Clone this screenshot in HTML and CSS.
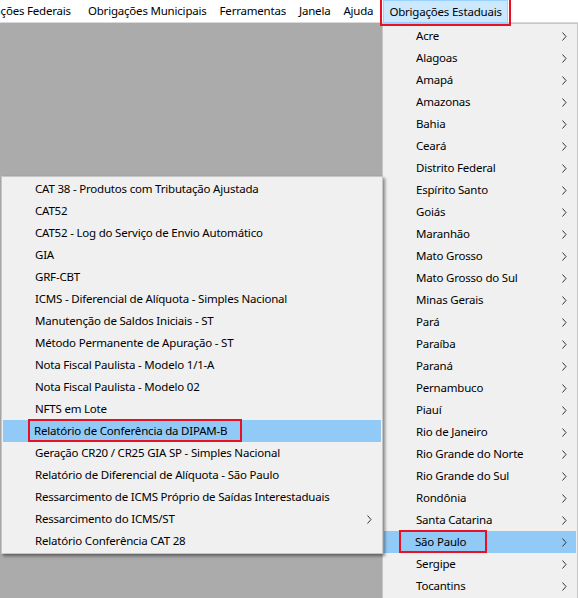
FILE: index.html
```html
<!DOCTYPE html>
<html lang="pt-BR">
<head>
<meta charset="utf-8">
<title>Obrigações Estaduais</title>
<link rel="stylesheet" href="styles.css">
</head>
<body>
<div class="app">
  <nav class="menubar">
    <span class="menubar__item menubar__item--first">Obrigações Federais</span>
    <span class="menubar__item">Obrigações Municipais</span>
    <span class="menubar__item">Ferramentas</span>
    <span class="menubar__item">Janela</span>
    <span class="menubar__item">Ajuda</span>
    <span class="menubar__item menubar__item--open mark">Obrigações Estaduais</span>
  </nav>

  <div class="workspace">
    <ul class="menu menu--states">
      <li class="menu__item"><span class="menu__label">Acre</span><svg class="chevron" viewBox="0 0 5 9"><path d="M0.5 0.5 L4 4.5 L0.5 8.5"/></svg></li>
      <li class="menu__item"><span class="menu__label">Alagoas</span><svg class="chevron" viewBox="0 0 5 9"><path d="M0.5 0.5 L4 4.5 L0.5 8.5"/></svg></li>
      <li class="menu__item"><span class="menu__label">Amapá</span><svg class="chevron" viewBox="0 0 5 9"><path d="M0.5 0.5 L4 4.5 L0.5 8.5"/></svg></li>
      <li class="menu__item"><span class="menu__label">Amazonas</span><svg class="chevron" viewBox="0 0 5 9"><path d="M0.5 0.5 L4 4.5 L0.5 8.5"/></svg></li>
      <li class="menu__item"><span class="menu__label">Bahia</span><svg class="chevron" viewBox="0 0 5 9"><path d="M0.5 0.5 L4 4.5 L0.5 8.5"/></svg></li>
      <li class="menu__item"><span class="menu__label">Ceará</span><svg class="chevron" viewBox="0 0 5 9"><path d="M0.5 0.5 L4 4.5 L0.5 8.5"/></svg></li>
      <li class="menu__item"><span class="menu__label">Distrito Federal</span><svg class="chevron" viewBox="0 0 5 9"><path d="M0.5 0.5 L4 4.5 L0.5 8.5"/></svg></li>
      <li class="menu__item"><span class="menu__label">Espírito Santo</span><svg class="chevron" viewBox="0 0 5 9"><path d="M0.5 0.5 L4 4.5 L0.5 8.5"/></svg></li>
      <li class="menu__item"><span class="menu__label">Goiás</span><svg class="chevron" viewBox="0 0 5 9"><path d="M0.5 0.5 L4 4.5 L0.5 8.5"/></svg></li>
      <li class="menu__item"><span class="menu__label">Maranhão</span><svg class="chevron" viewBox="0 0 5 9"><path d="M0.5 0.5 L4 4.5 L0.5 8.5"/></svg></li>
      <li class="menu__item"><span class="menu__label">Mato Grosso</span><svg class="chevron" viewBox="0 0 5 9"><path d="M0.5 0.5 L4 4.5 L0.5 8.5"/></svg></li>
      <li class="menu__item"><span class="menu__label">Mato Grosso do Sul</span><svg class="chevron" viewBox="0 0 5 9"><path d="M0.5 0.5 L4 4.5 L0.5 8.5"/></svg></li>
      <li class="menu__item"><span class="menu__label">Minas Gerais</span><svg class="chevron" viewBox="0 0 5 9"><path d="M0.5 0.5 L4 4.5 L0.5 8.5"/></svg></li>
      <li class="menu__item"><span class="menu__label">Pará</span><svg class="chevron" viewBox="0 0 5 9"><path d="M0.5 0.5 L4 4.5 L0.5 8.5"/></svg></li>
      <li class="menu__item"><span class="menu__label">Paraíba</span><svg class="chevron" viewBox="0 0 5 9"><path d="M0.5 0.5 L4 4.5 L0.5 8.5"/></svg></li>
      <li class="menu__item"><span class="menu__label">Paraná</span><svg class="chevron" viewBox="0 0 5 9"><path d="M0.5 0.5 L4 4.5 L0.5 8.5"/></svg></li>
      <li class="menu__item"><span class="menu__label">Pernambuco</span><svg class="chevron" viewBox="0 0 5 9"><path d="M0.5 0.5 L4 4.5 L0.5 8.5"/></svg></li>
      <li class="menu__item"><span class="menu__label">Piauí</span><svg class="chevron" viewBox="0 0 5 9"><path d="M0.5 0.5 L4 4.5 L0.5 8.5"/></svg></li>
      <li class="menu__item"><span class="menu__label">Rio de Janeiro</span><svg class="chevron" viewBox="0 0 5 9"><path d="M0.5 0.5 L4 4.5 L0.5 8.5"/></svg></li>
      <li class="menu__item"><span class="menu__label">Rio Grande do Norte</span><svg class="chevron" viewBox="0 0 5 9"><path d="M0.5 0.5 L4 4.5 L0.5 8.5"/></svg></li>
      <li class="menu__item"><span class="menu__label">Rio Grande do Sul</span><svg class="chevron" viewBox="0 0 5 9"><path d="M0.5 0.5 L4 4.5 L0.5 8.5"/></svg></li>
      <li class="menu__item"><span class="menu__label">Rondônia</span><svg class="chevron" viewBox="0 0 5 9"><path d="M0.5 0.5 L4 4.5 L0.5 8.5"/></svg></li>
      <li class="menu__item"><span class="menu__label">Santa Catarina</span><svg class="chevron" viewBox="0 0 5 9"><path d="M0.5 0.5 L4 4.5 L0.5 8.5"/></svg></li>
      <li class="menu__item menu__item--active"><span class="menu__label"><span class="mark mark--sp">São Paulo</span></span><svg class="chevron" viewBox="0 0 5 9"><path d="M0.5 0.5 L4 4.5 L0.5 8.5"/></svg></li>
      <li class="menu__item"><span class="menu__label">Sergipe</span><svg class="chevron" viewBox="0 0 5 9"><path d="M0.5 0.5 L4 4.5 L0.5 8.5"/></svg></li>
      <li class="menu__item"><span class="menu__label">Tocantins</span><svg class="chevron" viewBox="0 0 5 9"><path d="M0.5 0.5 L4 4.5 L0.5 8.5"/></svg></li>
    </ul>

    <ul class="menu menu--sp">
      <li class="menu__item"><span class="menu__label">CAT 38 - Produtos com Tributação Ajustada</span></li>
      <li class="menu__item"><span class="menu__label">CAT52</span></li>
      <li class="menu__item"><span class="menu__label">CAT52 - Log do Serviço de Envio Automático</span></li>
      <li class="menu__item"><span class="menu__label">GIA</span></li>
      <li class="menu__item"><span class="menu__label">GRF-CBT</span></li>
      <li class="menu__item"><span class="menu__label">ICMS - Diferencial de Alíquota - Simples Nacional</span></li>
      <li class="menu__item"><span class="menu__label">Manutenção de Saldos Iniciais - ST</span></li>
      <li class="menu__item"><span class="menu__label">Método Permanente de Apuração - ST</span></li>
      <li class="menu__item"><span class="menu__label">Nota Fiscal Paulista - Modelo 1/1-A</span></li>
      <li class="menu__item"><span class="menu__label">Nota Fiscal Paulista - Modelo 02</span></li>
      <li class="menu__item"><span class="menu__label">NFTS em Lote</span></li>
      <li class="menu__item menu__item--active"><span class="menu__label"><span class="mark mark--dipam">Relatório de Conferência da DIPAM-B</span></span></li>
      <li class="menu__item"><span class="menu__label">Geração CR20 / CR25 GIA SP - Simples Nacional</span></li>
      <li class="menu__item"><span class="menu__label">Relatório de Diferencial de Alíquota - São Paulo</span></li>
      <li class="menu__item"><span class="menu__label">Ressarcimento de ICMS Próprio de Saídas Interestaduais</span></li>
      <li class="menu__item"><span class="menu__label">Ressarcimento do ICMS/ST</span><svg class="chevron" viewBox="0 0 5 9"><path d="M0.5 0.5 L4 4.5 L0.5 8.5"/></svg></li>
      <li class="menu__item"><span class="menu__label">Relatório Conferência CAT 28</span></li>
    </ul>
  </div>
</div>
</body>
</html>
```

FILE: styles.css
```css
* {
  box-sizing: border-box;
}

html, body {
  margin: 0;
  padding: 0;
  height: 100%;
}

body {
  font-family: "Noto Sans", "Open Sans", sans-serif;
  font-size: 11.5px;
  letter-spacing: -0.2px;
  color: #000;
  background: #ababab;
  overflow: hidden;
}

.app {
  display: flex;
  flex-direction: column;
  height: 100%;
}

/* top menu bar */
.menubar {
  position: relative;
  z-index: 3;
  display: flex;
  height: 23px;
  background: #fff;
  border-bottom: 1px solid #dadada;
  white-space: nowrap;
}

.menubar__item {
  display: flex;
  align-items: center;
  padding: 0 6.5px 1px;
  height: 22px;
}

.menubar__item--first {
  margin-left: -42px;
  padding-right: 10.5px;
}

.menubar__item--open {
  margin-left: 3px;
  background: #cce8ff;
  border: 1px solid #99d1ff;
  padding: 0 5.5px 1px;
  height: 23px;
}

/* red annotation frame */
.mark {
  outline: 2px solid #e81123;
}

.menubar__item--open.mark {
  outline-offset: 1px;
}

.mark--dipam {
  display: inline-block;
  margin-left: -5px;
  padding: 0 13px 0 4px;
  line-height: 19px;
}

.mark--sp {
  display: inline-block;
  margin-left: -15px;
  padding: 0 19px 0 14px;
  line-height: 19px;
}

/* MDI client area */
.workspace {
  position: relative;
  flex: 1;
  background: #ababab;
}

/* drop-down menus */
.menu {
  position: absolute;
  margin: 0;
  padding: 1px;
  list-style: none;
  background: #f0f0f0;
  border: 1px solid #c6c6c6;
}

.menu--states {
  top: 0;
  left: 382px;
  width: 196px;
  z-index: 1;
}

.menu--sp {
  top: 153px;
  left: 1px;
  width: 382px;
  z-index: 2;
  box-shadow: 2px 2px 3px rgba(0, 0, 0, 0.45);
}

.menu__item {
  display: flex;
  align-items: center;
  height: 22px;
  padding: 0 9px 0 32px;
  white-space: nowrap;
}

.menu__item--active {
  background: #91c9f7;
}

.menu__label {
  flex: 1;
  padding-bottom: 1px;
}

.chevron {
  width: 5px;
  height: 9px;
  fill: none;
  stroke: #333;
  stroke-width: 1;
}
```
